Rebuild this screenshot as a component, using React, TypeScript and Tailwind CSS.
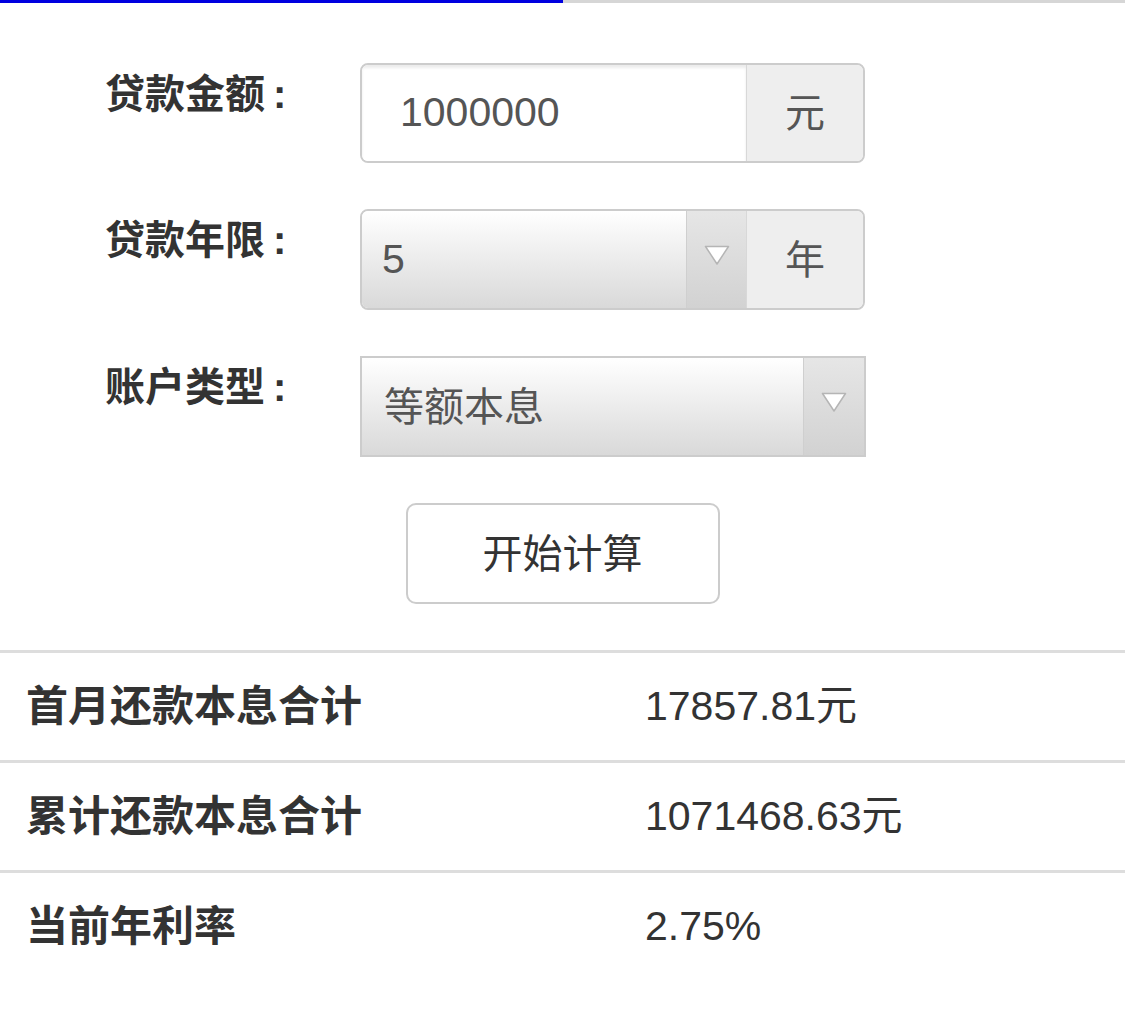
import React from 'react';

const font = { fontFamily: '"Liberation Sans", "Noto Sans CJK SC", sans-serif' };

const Arrow = () => (
  <svg width="26" height="20" viewBox="0 0 26 20">
    <polygon points="1.5,1.5 24.5,1.5 13,19" fill="#ffffff" stroke="#b5b5b5" strokeWidth="1.5" strokeLinejoin="round" />
  </svg>
);

const Label = ({ children }: { children: React.ReactNode }) => (
  <div className="w-[255px] shrink-0 pt-[7px] text-[40px] leading-[48px] font-bold text-[#333]">
    {children}
    <span className="ml-[8px]">:</span>
  </div>
);

const results = [
  { label: '首月还款本息合计', value: '17857.81元' },
  { label: '累计还款本息合计', value: '1071468.63元' },
  { label: '当前年利率', value: '2.75%' },
];

const App = () => {
  return (
    <div className="min-h-screen bg-white" style={font}>
      {/* progress bar */}
      <div className="flex h-[3px] w-full bg-[#d6d6d6]">
        <div className="h-full w-[563px] bg-[#0000e0]" />
      </div>

      <div className="pl-[105px] pt-[60px]">
        {/* 贷款金额 */}
        <div className="flex">
          <Label>贷款金额</Label>
          <div className="flex h-[100px] w-[505px] overflow-hidden rounded-[8px] border-2 border-[#cccccc]">
            <div className="flex flex-1 items-center bg-white pl-[38px] text-[41px] text-[#555] shadow-[inset_0_3px_3px_rgba(0,0,0,0.08)]">
              1000000
            </div>
            <div className="flex w-[117px] items-center justify-center border-l border-[#d8d8d8] bg-[#eeeeee] text-[40px] text-[#555]">
              元
            </div>
          </div>
        </div>

        {/* 贷款年限 */}
        <div className="mt-[46px] flex">
          <Label>贷款年限</Label>
          <div className="flex h-[101px] w-[505px] overflow-hidden rounded-[8px] border-2 border-[#cccccc]">
            <div className="flex flex-1 items-center bg-gradient-to-b from-white to-[#d9d9d9] pl-[20px] text-[41px] text-[#555]">
              5
            </div>
            <div className="flex w-[60px] items-start justify-center border-l border-[#cfcfcf] bg-gradient-to-b from-[#e6e6e6] to-[#d2d2d2] pt-[34px]">
              <Arrow />
            </div>
            <div className="flex w-[117px] items-center justify-center border-l border-[#d8d8d8] bg-[#eeeeee] text-[40px] text-[#555]">
              年
            </div>
          </div>
        </div>

        {/* 账户类型 */}
        <div className="mt-[46px] flex">
          <Label>账户类型</Label>
          <div className="flex h-[101px] w-[506px] overflow-hidden border-2 border-[#cccccc]">
            <div className="flex flex-1 items-center bg-gradient-to-b from-white to-[#d9d9d9] pl-[22px] text-[40px] text-[#555]">
              等额本息
            </div>
            <div className="flex w-[61px] items-start justify-center border-l border-[#cfcfcf] bg-gradient-to-b from-[#e6e6e6] to-[#d2d2d2] pt-[34px]">
              <Arrow />
            </div>
          </div>
        </div>
      </div>

      {/* 开始计算 */}
      <div className="mt-[46px] flex justify-center">
        <button
          type="button"
          className="h-[101px] w-[314px] rounded-[10px] border-2 border-[#cccccc] bg-white text-[40px] text-[#333]"
        >
          开始计算
        </button>
      </div>

      {/* results */}
      <div className="mt-[46px]">
        {results.map((r) => (
          <div key={r.label} className="flex h-[110px] items-center border-t-[3px] border-[#dddddd]">
            <div className="w-[645px] pl-[26px] text-[42px] font-bold text-[#333]">{r.label}</div>
            <div className="text-[41px] text-[#333]">{r.value}</div>
          </div>
        ))}
      </div>
    </div>
  );
};

export default App;
